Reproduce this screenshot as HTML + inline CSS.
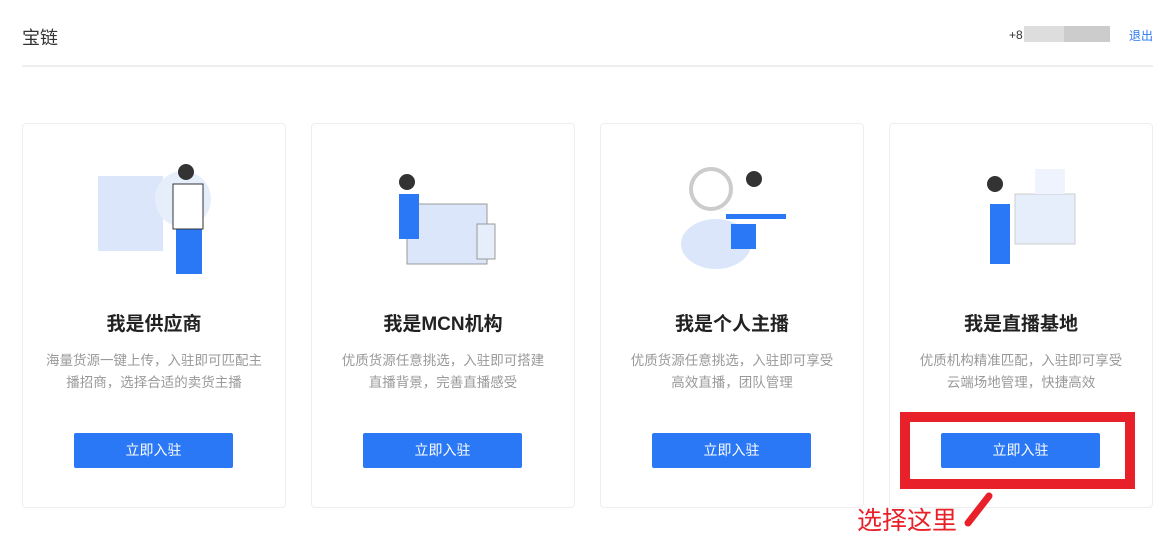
<!DOCTYPE html><html><head><meta charset="utf-8"><style>
body{margin:0;width:1176px;height:555px;background:#fff;font-family:"Liberation Sans","Noto Sans CJK SC",sans-serif;position:relative;overflow:hidden}
.logo{position:absolute;left:22px;top:24px;font-size:18px;color:#333}
.phone{position:absolute;left:1009px;top:28px;font-size:12px;color:#333}
.blur{position:absolute;top:26px;height:16px;background:#bbb}
.out{position:absolute;left:1129px;top:27px;font-size:12px;color:#2a78f5}
.hr{position:absolute;left:22px;top:65px;width:1131px;height:2px;background:#eee}
.card{position:absolute;top:123px;width:262px;height:383px;border:1px solid #eee;border-radius:4px;text-align:center}
.card svg{position:absolute;left:75px;top:40px}
.t{position:absolute;top:185px;left:0;right:0;font-size:19px;font-weight:bold;color:#222}
.d{position:absolute;top:226px;left:0;right:0;font-size:13.5px;color:#999;line-height:22px;white-space:nowrap}
.b{position:absolute;left:51px;top:309px;width:159px;height:35px;background:#2a78f5;border-radius:2px;color:#fff;font-size:14px;line-height:35px}
.red{position:absolute;left:900px;top:412px;width:215px;height:57px;border:10px solid #e8202a}
.rt{position:absolute;left:857px;top:501px;font-size:25px;color:#e8202a}
</style></head><body>
<div class="logo">宝链</div>
<div class="phone">+8</div>
<div class="blur" style="left:1024px;width:40px;background:#ddd"></div>
<div class="blur" style="left:1064px;width:46px;background:#ccc"></div>
<div class="out">退出</div>
<div class="hr"></div>

<div class="card" style="left:22px">
<svg width="120" height="120"><rect x="0" y="12" width="65" height="75" fill="#dbe6fb"/><circle cx="85" cy="35" r="28" fill="#e6eefc"/><rect x="78" y="65" width="14" height="45" fill="#2a78f5"/><rect x="92" y="65" width="12" height="45" fill="#2a78f5"/><rect x="75" y="20" width="30" height="45" fill="#fff" stroke="#333"/><circle cx="88" cy="8" r="8" fill="#333"/></svg>
<div class="t">我是供应商</div><div class="d">海量货源一键上传，入驻即可匹配主<br>播招商，选择合适的卖货主播</div><div class="b">立即入驻</div></div>

<div class="card" style="left:311px">
<svg width="120" height="120"><rect x="20" y="40" width="80" height="60" fill="#dbe6fb" stroke="#999"/><rect x="90" y="60" width="18" height="35" fill="#e6eefc" stroke="#999"/><rect x="12" y="30" width="20" height="45" fill="#2a78f5"/><circle cx="20" cy="18" r="8" fill="#333"/></svg>
<div class="t">我是MCN机构</div><div class="d">优质货源任意挑选，入驻即可搭建<br>直播背景，完善直播感受</div><div class="b">立即入驻</div></div>

<div class="card" style="left:600px">
<svg width="120" height="120"><circle cx="35" cy="25" r="20" fill="none" stroke="#ccc" stroke-width="4"/><ellipse cx="40" cy="80" rx="35" ry="25" fill="#dbe6fb"/><rect x="50" y="50" width="60" height="5" fill="#2a78f5"/><rect x="55" y="60" width="25" height="25" fill="#2a78f5"/><circle cx="78" cy="15" r="8" fill="#333"/></svg>
<div class="t">我是个人主播</div><div class="d">优质货源任意挑选，入驻即可享受<br>高效直播，团队管理</div><div class="b">立即入驻</div></div>

<div class="card" style="left:889px">
<svg width="120" height="120"><rect x="50" y="30" width="60" height="50" fill="#e6eefc" stroke="#ccc"/><rect x="70" y="5" width="30" height="25" fill="#eef3fd"/><rect x="25" y="40" width="20" height="60" fill="#2a78f5"/><circle cx="30" cy="20" r="8" fill="#333"/></svg>
<div class="t">我是直播基地</div><div class="d">优质机构精准匹配，入驻即可享受<br>云端场地管理，快捷高效</div><div class="b">立即入驻</div></div>

<div class="red"></div>
<div class="rt">选择这里</div>
<svg style="position:absolute;left:960px;top:488px" width="40" height="45"><line x1="8" y1="35" x2="29" y2="8" stroke="#e8202a" stroke-width="7" stroke-linecap="round"/></svg>
</body></html>
